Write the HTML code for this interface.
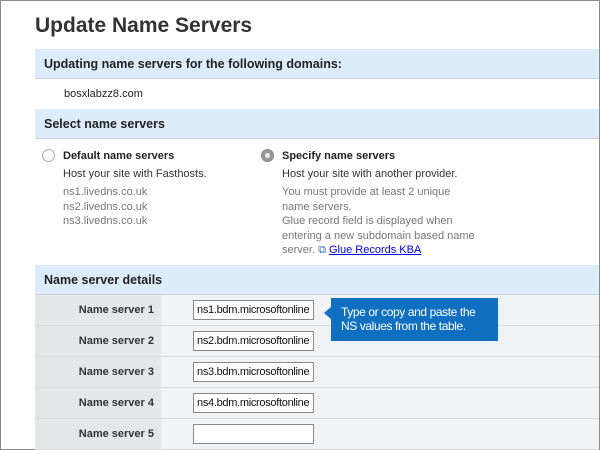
<!DOCTYPE html>
<html><head><style>
*{margin:0;padding:0;box-sizing:border-box}
body{width:600px;height:450px;overflow:hidden;background:#fff;font-family:"Liberation Sans",Arial,sans-serif;position:relative;border:1px solid #8a8a8a}
.a{position:absolute;white-space:nowrap}
.band{position:absolute;left:34px;right:0;height:30px;background:#ddecfb;border-bottom:1px solid #c9d3de;font-weight:bold;font-size:12.5px;color:#222;padding:8px 0 0 9px}
.g{color:#777;font-size:11px;line-height:14.5px}
.row{position:absolute;left:34px;right:0;height:31px;border-bottom:1px solid #dcdcdc;background:#f0f2f5}
.row .l{position:absolute;left:0;top:0;width:126px;height:30px;background:#e4e6e9;font-weight:bold;font-size:11px;color:#333;text-align:right;padding:9px 7px 0 0}
.row .i{position:absolute;left:158px;top:5px;width:121px;height:20px;background:#fff;border:1px solid #888;font-size:11px;letter-spacing:-0.3px;padding:3px 0 0 3px;overflow:hidden;white-space:nowrap;color:#111}
</style></head><body>
<div class="a" style="left:34px;top:13px;font-size:21px;font-weight:bold;color:#333">Update Name Servers</div>
<div class="band" style="top:48px">Updating name servers for the following domains:</div>
<div class="a" style="left:63px;top:87px;font-size:11px;color:#222">bosxlabzz8.com</div>
<div class="band" style="top:108px">Select name servers</div>
<div class="a" style="left:41px;top:148px;width:13px;height:13px;border:1px solid #aaa;border-radius:50%;background:#fafafa"></div>
<div class="a" style="left:62px;top:149px;font-size:11px;font-weight:bold;color:#222">Default name servers</div>
<div class="a" style="left:62px;top:167px;font-size:11px;color:#333">Host your site with Fasthosts.</div>
<div class="a g" style="left:62px;top:184px">ns1.livedns.co.uk<br>ns2.livedns.co.uk<br>ns3.livedns.co.uk</div>
<div class="a" style="left:260px;top:148px;width:13px;height:13px;border-radius:50%;background:#999;border:1px solid #888"><div style="position:absolute;left:3px;top:3px;width:5px;height:5px;border-radius:50%;background:#eee"></div></div>
<div class="a" style="left:281px;top:149px;font-size:11px;font-weight:bold;color:#222">Specify name servers</div>
<div class="a" style="left:281px;top:167px;font-size:11px;color:#333">Host your site with another provider.</div>
<div class="a g" style="left:281px;top:184px">You must provide at least 2 unique<br>name servers.<br>Glue record field is displayed when<br>entering a new subdomain based name<br>server. <span style="color:#36c">&#x29C9;</span> <span style="color:#00e;text-decoration:underline">Glue Records KBA</span></div>
<div class="band" style="top:264px">Name server details</div>
<div class="row" style="top:294px"><div class="l">Name server 1</div><div class="i">ns1.bdm.microsoftonline</div></div>
<div class="row" style="top:325px"><div class="l">Name server 2</div><div class="i">ns2.bdm.microsoftonline</div></div>
<div class="row" style="top:356px"><div class="l">Name server 3</div><div class="i">ns3.bdm.microsoftonline</div></div>
<div class="row" style="top:387px"><div class="l">Name server 4</div><div class="i">ns4.bdm.microsoftonline</div></div>
<div class="row" style="top:418px"><div class="l">Name server 5</div><div class="i"></div></div>
<div class="a" style="left:323px;top:306px;width:0;height:0;border-top:6px solid transparent;border-bottom:6px solid transparent;border-right:7px solid #0f6fc0"></div>
<div class="a" style="left:330px;top:297px;width:167px;height:43px;background:#0f6fc0;color:#fff;font-size:12px;letter-spacing:-0.4px;line-height:14px;padding:7px 0 0 10px">Type or copy and paste the<br>NS values from the table.</div>
</body></html>
